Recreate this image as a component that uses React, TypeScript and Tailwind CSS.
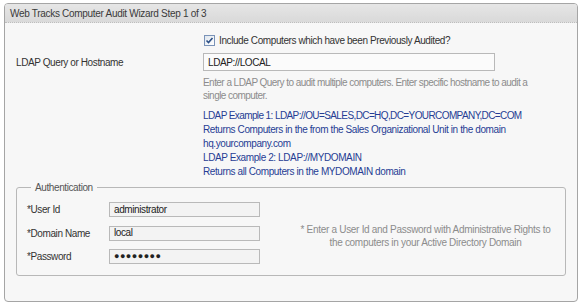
import React from 'react';

const font = { fontFamily: '"Liberation Sans", Arial, sans-serif' };

const CheckBox: React.FC = () => (
    <span className="inline-flex w-[11px] h-[11px] border border-[#7a93b8] bg-gradient-to-br from-[#dfe6ee] to-[#ffffff] items-center justify-center">
        <svg width="9" height="9" viewBox="0 0 9 9">
            <path d="M1.5 4.5 L3.5 6.5 L7.5 2" fill="none" stroke="#2c4f86" strokeWidth="1.6" />
        </svg>
    </span>
);

const AuthRow: React.FC<{ label: string; value: string; password?: boolean }> = ({ label, value, password }) => (
    <div className="flex items-center h-[23.5px]">
        <span className="w-[82px] text-[#333]">{label}</span>
        <div className="w-[151px] h-[15px] border border-[#b9b9b9] bg-[#f3f3f3] pl-[4px] flex items-center text-[#222] leading-none">
            {password ? <span className="tracking-[0.5px] text-[9px]">●●●●●●●●</span> : value}
        </div>
    </div>
);

export default function App() {
    return (
        <div className="w-[580px] h-[307px] bg-white pt-[3px] pl-[4px] text-[10px] tracking-[-0.4px]" style={font}>
            <div className="w-[574px] h-[299px] border border-[#a5a5a5] rounded-[4px] bg-[#f7f7f7] overflow-hidden">
                <div className="h-[19px] bg-gradient-to-b from-[#e6e6e6] to-[#d9d9d9] border-b border-dotted border-[#bdbdbd] pl-[5px] leading-[19px] text-[#3a3a3a] tracking-[-0.3px]">
                    Web Tracks Computer Audit Wizard Step 1 of 3
                </div>
                <div className="pl-[11px] pr-[10px]">
                    <div className="flex items-center gap-[4px] ml-[188px] mt-[11px] h-[12px] text-[#333]">
                        <CheckBox />
                        <span>Include Computers which have been Previously Audited?</span>
                    </div>
                    <div className="flex items-center mt-[7px]">
                        <span className="w-[187px] text-[#333]">LDAP Query or Hostname</span>
                        <div className="w-[292px] h-[18px] border border-[#b9b9b9] bg-[#fbfbfb] pl-[4px] flex items-center text-[#222]">
                            LDAP://LOCAL
                        </div>
                    </div>
                    <div className="ml-[187px] mt-[5px] leading-[13px] text-[#8c8c8c] tracking-[-0.55px]">
                        Enter a LDAP Query to audit multiple computers. Enter specific hostname to audit a<br />
                        single computer.
                    </div>
                    <div className="ml-[187px] mt-[7px] leading-[14px] text-[#263d94]">
                        <div className="tracking-[-0.6px]">LDAP Example 1: LDAP://OU=SALES,DC=HQ,DC=YOURCOMPANY,DC=COM</div>
                        <div>Returns Computers in the from the Sales Organizational Unit in the domain</div>
                        <div>hq.yourcompany.com</div>
                        <div>LDAP Example 2: LDAP://MYDOMAIN</div>
                        <div>Returns all Computers in the MYDOMAIN domain</div>
                    </div>
                    <fieldset className="mt-[1px] w-[550px] h-[96px] border border-[#b8b8b8] rounded-[3px] pl-[10px] pr-[4px] flex">
                        <legend className="ml-[4px] px-[4px] text-[#555]">Authentication</legend>
                        <div className="pt-[3px]">
                            <AuthRow label="*User Id" value="administrator" />
                            <AuthRow label="*Domain Name" value="local" />
                            <AuthRow label="*Password" value="" password />
                        </div>
                        <div className="flex-1 flex items-center justify-center text-center text-[#8c8c8c] leading-[13px] pl-[30px] pt-[2px] tracking-[-0.3px]">
                            * Enter a User Id and Password with Administrative Rights to<br />
                            the computers in your Active Directory Domain
                        </div>
                    </fieldset>
                </div>
            </div>
        </div>
    );
}
